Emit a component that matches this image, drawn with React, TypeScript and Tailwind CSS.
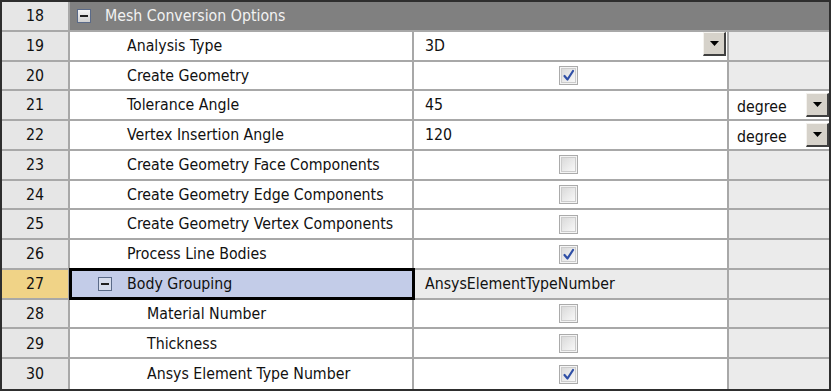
type Row = {
  n: number;
  name: string;
  level: 1 | 2;
  kind: "drop" | "check" | "text" | "unit";
  value?: string;
  checked?: boolean;
  group?: boolean;
  selected?: boolean;
};

const rows: Row[] = [
  { n: 19, name: "Analysis Type", level: 1, kind: "drop", value: "3D" },
  { n: 20, name: "Create Geometry", level: 1, kind: "check", checked: true },
  { n: 21, name: "Tolerance Angle", level: 1, kind: "unit", value: "45" },
  { n: 22, name: "Vertex Insertion Angle", level: 1, kind: "unit", value: "120" },
  { n: 23, name: "Create Geometry Face Components", level: 1, kind: "check", checked: false },
  { n: 24, name: "Create Geometry Edge Components", level: 1, kind: "check", checked: false },
  { n: 25, name: "Create Geometry Vertex Components", level: 1, kind: "check", checked: false },
  { n: 26, name: "Process Line Bodies", level: 1, kind: "check", checked: true },
  { n: 27, name: "Body Grouping", level: 1, kind: "text", value: "AnsysElementTypeNumber", group: true, selected: true },
  { n: 28, name: "Material Number", level: 2, kind: "check", checked: false },
  { n: 29, name: "Thickness", level: 2, kind: "check", checked: false },
  { n: 30, name: "Ansys Element Type Number", level: 2, kind: "check", checked: true },
];

function MinusBox({ tint }: { tint?: boolean }) {
  return (
    <span
      className={`flex h-[14px] w-[14px] items-center justify-center border border-[#5a6a88] ${
        tint ? "bg-[#d6dcec]" : "bg-gradient-to-b from-[#f4f4f4] to-[#d0d0d0]"
      }`}
    >
      <span className="h-[2px] w-[8px] bg-[#202020]" />
    </span>
  );
}

function CheckBox({ checked }: { checked?: boolean }) {
  return (
    <span className="flex h-[19px] w-[19px] items-center justify-center border border-[#ababab] bg-[#f4f4f4]">
      <span className="flex h-[15px] w-[15px] items-center justify-center border border-[#cccccc] bg-gradient-to-br from-[#dadada] to-[#f8f8f8]">
        {checked && (
          <svg width="13" height="13" viewBox="0 0 13 13">
            <path d="M2.5 7 L5.5 10.5 L11 2" fill="none" stroke="#2f4fa6" strokeWidth="2.2" strokeLinecap="round" strokeLinejoin="round" />
          </svg>
        )}
      </span>
    </span>
  );
}

function DropButton() {
  return (
    <span className="flex h-[24px] w-[23px] items-center justify-center border-t border-l border-t-[#f4f2ee] border-l-[#f4f2ee] border-r-2 border-b-2 border-r-[#404040] border-b-[#404040] bg-[#d6d2ca]">
      <svg width="9" height="5" viewBox="0 0 9 5">
        <path d="M0 0 H9 L4.5 5 Z" fill="#000" />
      </svg>
    </span>
  );
}

export default function App() {
  return (
    <div
      className="w-[831px] h-[391px] bg-white border-2 border-[#2e2e2e] text-[15.75px] text-[#111]"
      style={{ fontFamily: '"DejaVu Sans Condensed", "DejaVu Sans", Tahoma, sans-serif' }}
    >
      <div className="grid h-full grid-rows-[repeat(13,1fr)]">
        {/* header row */}
        <div className="flex border-b-2 border-[#a8a8a8]">
          <div className="flex w-[68px] items-center justify-center border-r-2 border-[#a8a8a8] bg-[#e6e6e6]">18</div>
          <div className="flex flex-1 items-center bg-[#808080] pl-[7px] text-[#f2f2f2]">
            <MinusBox />
            <span className="ml-[14px]">Mesh Conversion Options</span>
          </div>
        </div>

        {rows.map((r, i) => {
          const last = i === rows.length - 1;
          return (
            <div key={r.n} className={`relative flex ${last ? "" : "border-b-2 border-[#a8a8a8]"}`}>
              <div
                className={`flex w-[68px] items-center justify-center border-r-2 border-[#a8a8a8] ${
                  r.selected ? "bg-[#f0d387]" : "bg-[#e6e6e6]"
                }`}
              >
                {r.n}
              </div>
              <div
                className={`flex w-[344px] items-center border-r-2 border-[#a8a8a8] ${
                  r.selected ? "bg-[#c3cce8]" : "bg-white"
                } ${r.level === 2 ? "pl-[77px]" : r.group ? "pl-[28px]" : "pl-[57px]"}`}
              >
                {r.group && (
                  <span className="mr-[15px]">
                    <MinusBox tint />
                  </span>
                )}
                {r.name}
              </div>
              <div
                className={`flex w-[315px] items-center border-r-2 border-[#a8a8a8] ${
                  r.kind === "text" ? "bg-[#ebebeb]" : "bg-white"
                } ${r.kind === "check" ? "justify-center pr-[4px]" : "pl-[11px]"}`}
              >
                {r.kind === "check" && <CheckBox checked={r.checked} />}
                {r.kind !== "check" && <span className="flex-1">{r.value}</span>}
                {r.kind === "drop" && (
                  <span className="mr-[1px] self-start">
                    <DropButton />
                  </span>
                )}
              </div>
              <div className={`flex flex-1 items-center ${r.kind === "unit" ? "bg-white pl-[8px]" : "bg-[#ebebeb]"}`}>
                {r.kind === "unit" && (
                  <>
                    <span className="flex-1 pt-[4px]">degree</span>
                    <DropButton />
                  </>
                )}
              </div>
              {r.selected && (
                <div className="pointer-events-none absolute left-[67px] top-[-2px] h-[calc(100%+4px)] w-[346px] border-[3px] border-black" />
              )}
            </div>
          );
        })}
      </div>
    </div>
  );
}
